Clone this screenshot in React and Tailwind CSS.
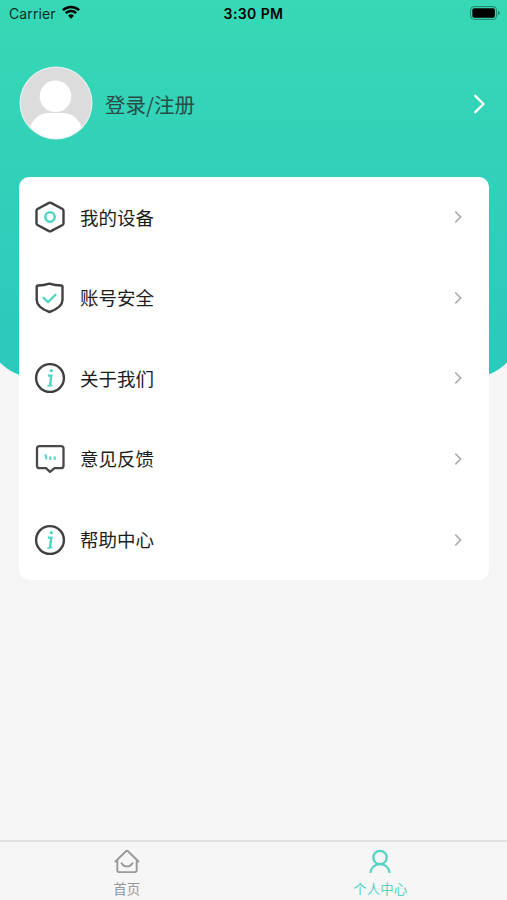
const FONT = "font-['Liberation_Sans','Noto_Sans_CJK_SC',sans-serif]";

function Chevron({ className, width = 1.5 }) {
  return (
    <svg viewBox="0 0 10 18" fill="none" stroke="currentColor" strokeWidth={width} className={className}>
      <path d="M1 1l8 8-8 8" />
    </svg>
  );
}

function DeviceIcon() {
  return (
    <svg viewBox="0 0 32 32" fill="none" strokeLinejoin="round" className="w-8 h-8">
      <path d="M15 1.900q1-.5 2 0L28.500 8q1 .6 1 1.700v12.600q0 1.100-1 1.700L17 30.100q-1 .5-2 0L3.500 24q-1-.6-1-1.700V9.700q0-1.100 1-1.700z" stroke="#404040" strokeWidth="2.400" />
      <circle cx="16" cy="16" r="4.700" stroke="#4fd5c5" strokeWidth="2.500" />
    </svg>
  );
}

function ShieldIcon() {
  return (
    <svg viewBox="0 0 32 32" fill="none" strokeLinejoin="round" strokeLinecap="round" className="w-8 h-8">
      <path d="M15.500 1.700c-4 1.300-8 1.800-11.500 1.800-.8 0-1.300.5-1.300 1.300V18c0 6.500 5.800 9.500 12.800 12C22.500 27.500 28.500 24.500 28.500 18V4.800c0-.8-.5-1.300-1.300-1.300-3.700 0-7.700-.5-11.700-1.800z" stroke="#404040" strokeWidth="2.400" />
      <path d="M9.500 15.700l4.500 4.500 7.500-7.500" stroke="#4fd5c5" strokeWidth="2.300" />
    </svg>
  );
}

function InfoIcon() {
  return (
    <svg viewBox="0 0 32 32" fill="none" className="w-8 h-8">
      <circle cx="16" cy="16" r="13.900" stroke="#404040" strokeWidth="2.400" />
      <circle cx="17.300" cy="8.700" r="1.600" fill="#4fd5c5" />
      <path d="M13.800 13.600h3.500l-1.300 10" stroke="#4fd5c5" strokeWidth="2.400" />
      <path d="M13.300 24.100h2.800l2.400-1" stroke="#4fd5c5" strokeWidth="1.500" />
    </svg>
  );
}

function FeedbackIcon() {
  return (
    <svg viewBox="0 0 32 32" fill="none" strokeLinejoin="round" className="w-8 h-8">
      <path d="M5.500 3.200h21.500q2.500 0 2.500 2.500v17q0 2.500-2.500 2.500h-6.500L16 28.800l-4-3.600H5.500Q3 25.200 3 22.700v-17q0-2.500 2.500-2.500z" stroke="#484848" strokeWidth="2.300" />
      <path d="M11.500 11.300l.8 5M16.300 13.500v3.300M20.700 13.500v3.300" stroke="#4fd5c5" strokeWidth="2.100" />
    </svg>
  );
}

const MENU = [
  { label: "我的设备", Icon: DeviceIcon },
  { label: "账号安全", Icon: ShieldIcon },
  { label: "关于我们", Icon: InfoIcon },
  { label: "意见反馈", Icon: FeedbackIcon },
  { label: "帮助中心", Icon: InfoIcon },
];

function StatusBar() {
  return (
    <div className="grid grid-cols-3 items-center h-[26px] pl-[9px] pr-[7px] text-black font-['Inter',sans-serif]">
      <div className="flex items-center gap-1.5 text-[14px] tracking-[0.1px]">
        <span className="opacity-80">Carrier</span>
        <svg viewBox="0 0 18 14" className="w-[18px] h-[14px] -mt-0.5" fill="none" stroke="currentColor" strokeWidth="2.500">
          <path d="M.9 5.200a11.600 11.600 0 0 1 16.200 0M3.800 8.200a7.500 7.500 0 0 1 10.400 0" />
          <path d="M9 13.700l-2.900-3a4.200 4.200 0 0 1 5.800 0z" fill="currentColor" stroke="none" />
        </svg>
      </div>
      <div className="text-center text-[14px] font-semibold tracking-[0.4px] -ml-0.5">3:30 PM</div>
      <svg viewBox="0 0 30 14" className="w-[30px] h-[14px] justify-self-end">
        <rect x=".6" y=".6" width="26" height="12.800" rx="3.600" fill="none" stroke="#000" strokeOpacity=".4" />
        <rect x="2.300" y="2.300" width="22.600" height="9.400" rx="2" />
        <path d="M28 4.800q1.700.7 1.700 2.200T28 9.200z" fillOpacity=".4" />
      </svg>
    </div>
  );
}

function Avatar() {
  return (
    <svg viewBox="0 0 74 74" className="w-[74px] h-[74px]">
      <clipPath id="avatar"><circle cx="37" cy="37" r="35.500" /></clipPath>
      <circle cx="37" cy="37" r="36.500" fill="#e9f3f1" />
      <g clipPath="url(#avatar)">
        <path d="M0 0h74v74H0z" fill="#dcdcdc" />
        <circle cx="36.500" cy="30.300" r="15.800" fill="#fff" />
        <path d="M9 74c0-15 7-27 21-27h14c13 0 21 12 21 27z" fill="#fff" />
      </g>
    </svg>
  );
}

export default function App() {
  return (
    <div className={"flex flex-col h-[900px] bg-[#f5f5f5] overflow-hidden " + FONT}>
      {/* header */}
      <header className="h-[378px] shrink-0 overflow-hidden">
        <div className="-mx-[15px] px-[15px] h-full rounded-b-[52px] bg-linear-to-b from-[#37d8b5] to-[#2bc8bd]">
          <StatusBar />
          <div className="flex items-center h-[154px] pl-[19px] pr-[22px]">
            <Avatar />
            <span className="ml-3 pt-0.5 text-[20.5px] leading-none text-[#294c47] font-['Noto_Sans_CJK_SC',sans-serif]">登录/注册</span>
            <Chevron className="ml-auto mt-0.5 w-[12px] h-[20px] text-white" width={2.1} />
          </div>
        </div>
      </header>

      {/* menu */}
      <main className="relative -mt-[201px] ml-[19px] mr-[18px] rounded-[10px] bg-white">
        {MENU.map(({ label, Icon }) => (
          <div key={label} className="flex items-center h-[80.6px] pl-[15px] pr-[27px]">
            <Icon />
            <span className="ml-[14px] pt-[3px] text-[18.5px] leading-none text-[#1c1c1c]">{label}</span>
            <Chevron className="ml-auto w-[8px] h-[12px] text-[#aaa]" width={2.3} />
          </div>
        ))}
      </main>

      {/* tab bar */}
      <nav className="mt-auto grid grid-cols-2 h-[60px] border-t-2 border-[#e2e2e2] bg-[#f6f6f6]">
        <div className="flex flex-col items-center pt-[6px] text-[#999]">
          <svg viewBox="0 0 26 26" className="w-[26px] h-[26px] ml-px" fill="none" stroke="currentColor" strokeWidth="1.900" strokeLinecap="round" strokeLinejoin="round">
            <path d="M1.500 13.500L12.200 3q.8-.7 1.600 0l10.700 10.500M3.300 12v10.300q0 1.800 1.800 1.800h15.800q1.800 0 1.800-1.800V12" />
            <path d="M7.500 15.200c2.500 4.200 8.500 4.200 11 0" />
          </svg>
          <span className="mt-[9px] text-[13.500px] leading-none">首页</span>
        </div>
        <div className="flex flex-col items-center pt-[6px] text-[#55d3c3]">
          <svg viewBox="0 0 26 26" className="w-[26px] h-[26px]" fill="none" stroke="currentColor" strokeWidth="2.300" strokeLinecap="round">
            <circle cx="13" cy="9.500" r="6.700" />
            <path d="M3.500 23.900c1-4.600 4.800-7.700 9.500-7.700s8.500 3.100 9.500 7.700" />
          </svg>
          <span className="mt-[9px] text-[13.500px] leading-none">个人中心</span>
        </div>
      </nav>
    </div>
  );
}
